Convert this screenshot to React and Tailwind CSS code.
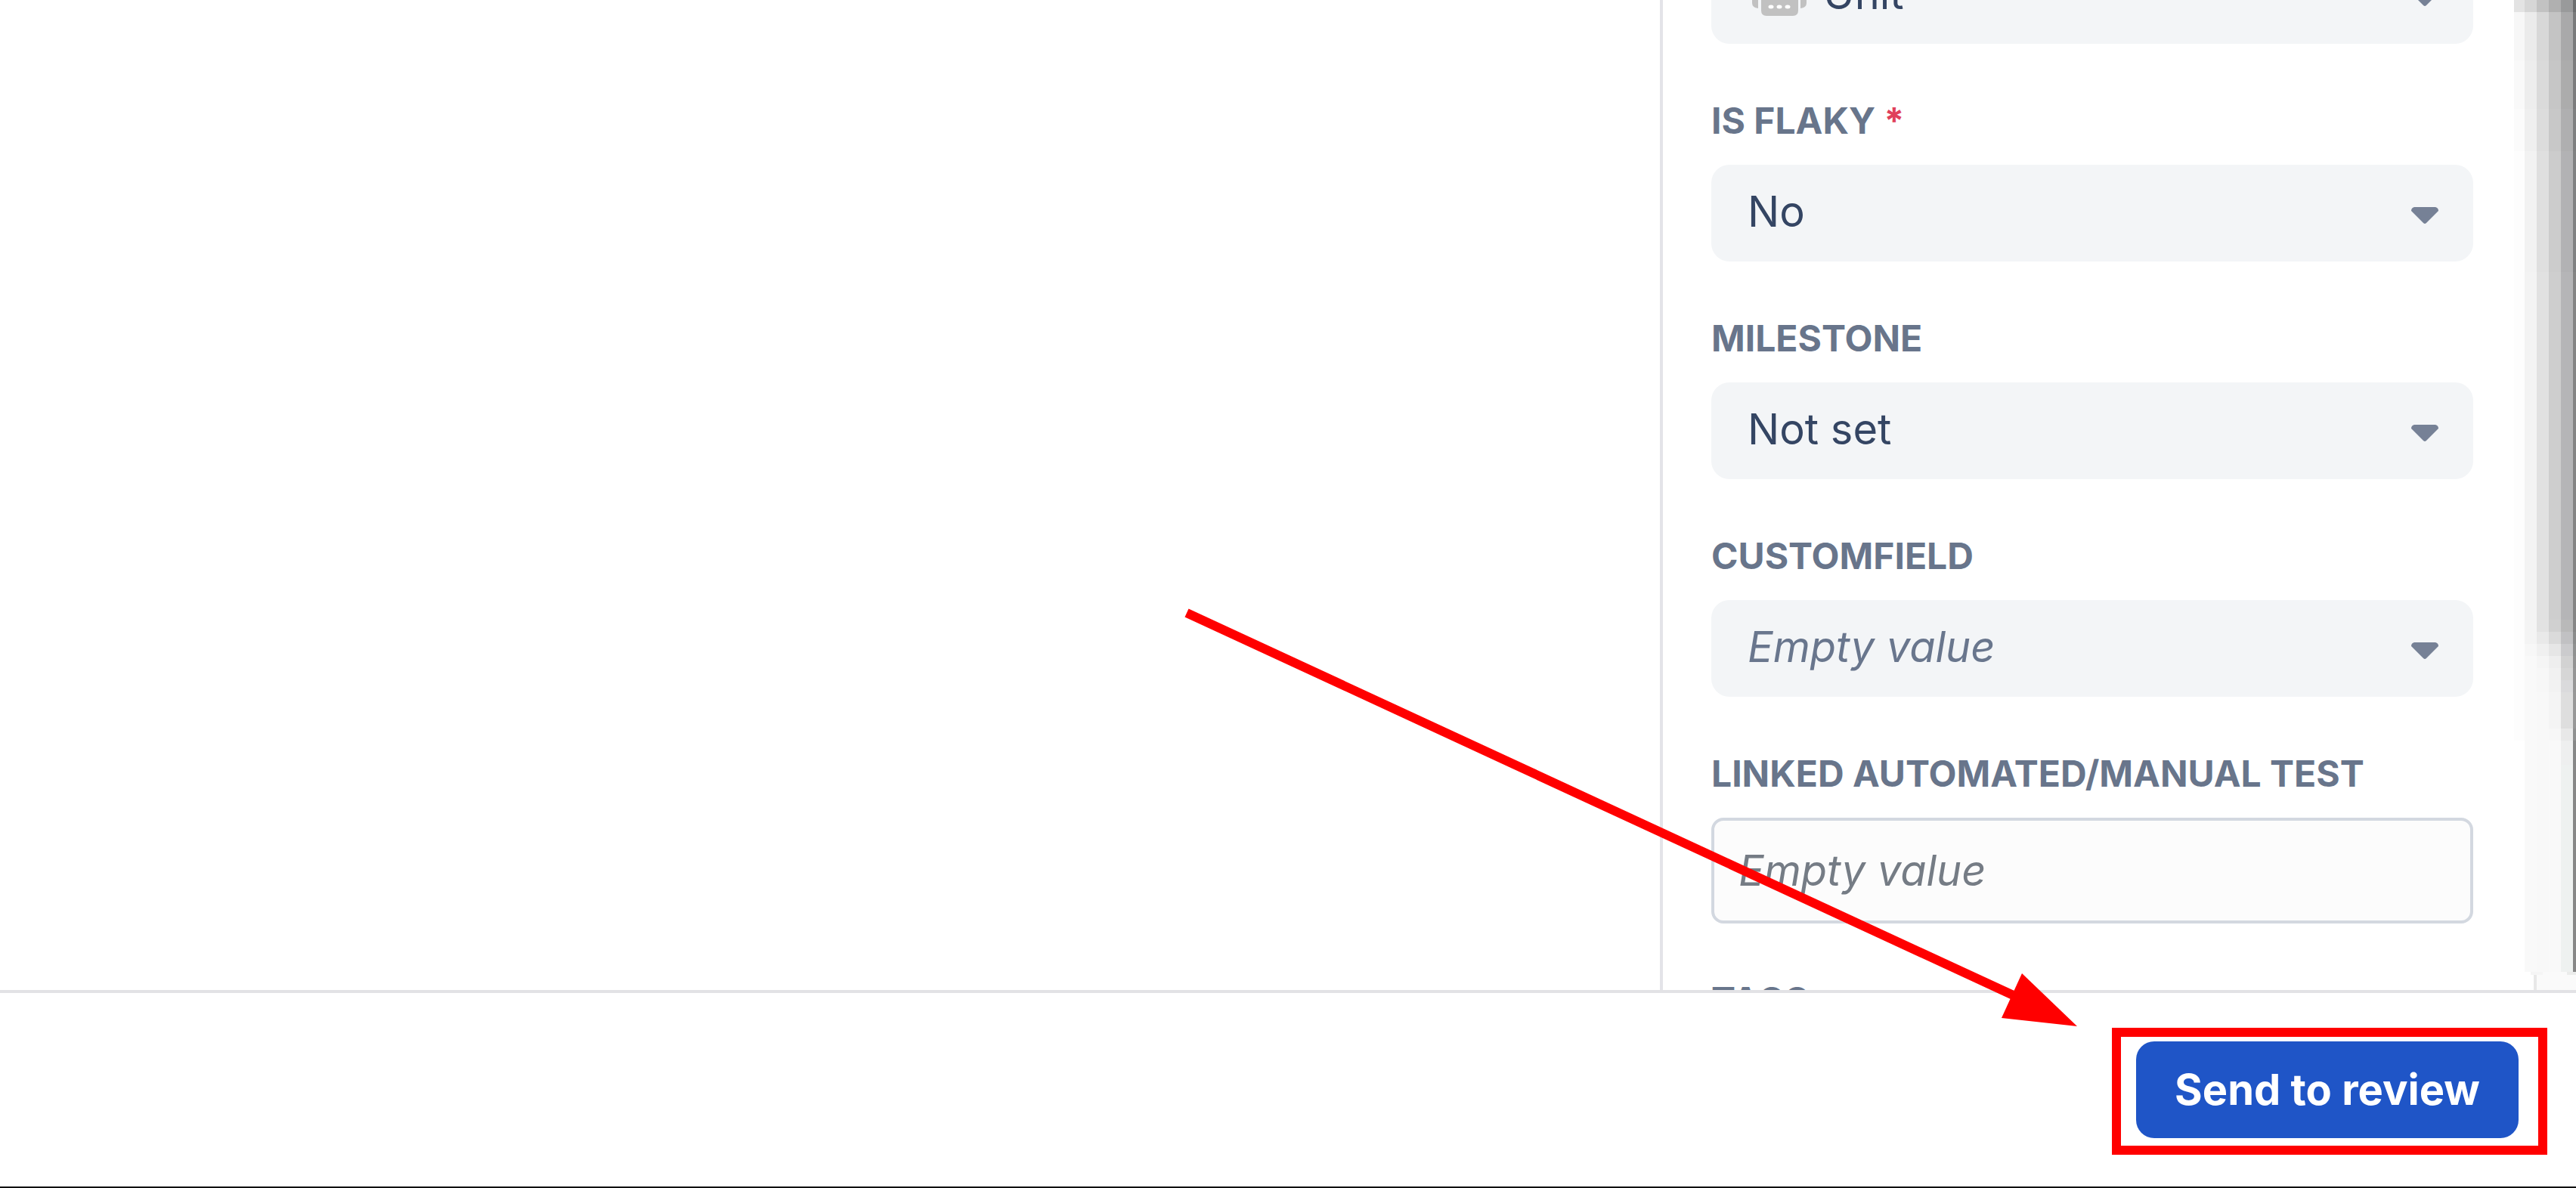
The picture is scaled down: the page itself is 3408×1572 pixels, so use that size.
import React, { useId } from "react";

function Label({ htmlFor, required, children }) {
  return (
    <label htmlFor={htmlFor} className="text-[48px] leading-[56px] font-bold text-[#68758b]">
      {children}
      {required && <span className="text-[#e0405a]"> *</span>}
    </label>
  );
}

function RobotIcon() {
  return (
    <svg viewBox="0 0 72 56" className="pointer-events-none absolute top-9 left-[54px] h-14 w-[72px] text-[#c1c1c1]" aria-hidden="true">
      <path fill="currentColor" d="M33 0h6v9h13q9 0 9 8v31q0 7-7 7H19q-7 0-7-7V17q0-8 9-8h12zM0 28q0-5 5-5h3v22q-8-1-8-7zM64 23h3q5 0 5 5v10q0 6-8 7z" />
      <circle cx="26" cy="27" r="5" fill="#fff" />
      <circle cx="46" cy="27" r="5" fill="#fff" />
      <g fill="#fff">
        <ellipse cx="25" cy="43" rx="3.5" ry="2.5" />
        <ellipse cx="36" cy="43" rx="3.5" ry="2.5" />
        <ellipse cx="47" cy="43" rx="3.5" ry="2.5" />
      </g>
    </svg>
  );
}

function Caret() {
  return (
    <svg viewBox="0 0 36 22" className="pointer-events-none absolute top-14 right-[46px] h-[22px] w-9" aria-hidden="true">
      <path d="M4 0h28q4 1 4 5L20 21q-2 2-4 0L0 5q0-4 4-5z" fill="#768196" />
    </svg>
  );
}

function SelectField({ label, value, required, empty, icon }) {
  const id = useId();
  return (
    <div className="flex flex-col gap-[30px]">
      {label && (
        <Label htmlFor={id} required={required}>
          {label}
        </Label>
      )}
      <div className="relative">
        <select
          id={id}
          aria-label={label ? undefined : "Type"}
          className={
            "block h-32 w-full appearance-none rounded-3xl bg-[#f3f5f7] pr-24 pb-1 text-[56px] " +
            (icon ? "pl-[148px] " : "pl-12 ") +
            (empty ? "text-[#69768d] italic" : "text-[#344563]")
          }
        >
          <option>{value}</option>
        </select>
        {icon}
        <Caret />
      </div>
    </div>
  );
}

const tiles = [
  ["h-4", "bg-[#e3e3e3]", "bg-[#d6d6d6]", "bg-[#c2c2c2]", "bg-[#b0b0b0]", "bg-[#999a9b]", "bg-[#6c6e6f]"],
  ["h-16", "bg-[#f7f7f7]", "bg-[#ebebeb]", "bg-[#d8d8d8]", "bg-[#c4c4c4]", "bg-[#a9a9aa]", "bg-[#797a7b]"],
  ["h-16", "bg-[#f9f9f9]", "bg-[#ededed]", "bg-[#dadada]", "bg-[#c6c6c6]", "bg-[#acacac]", "bg-[#7c7c7d]"],
  ["h-14", "bg-[#fbfbfb]", "bg-[#efefef]", "bg-[#dcdcdc]", "bg-[#c8c8c8]", "bg-[#afafb0]", "bg-[#7e7f80]"],
  ["h-[160px]", "bg-[#fdfdfd]", "bg-[#f2f2f2]", "bg-[#dfdfdf]", "bg-[#cccccc]", "bg-[#b2b2b4]", "bg-[#808182]"],
  ["h-[460px]", "bg-[#fdfdfd]", "bg-[#f3f3f3]", "bg-[#e1e1e1]", "bg-[#cecece]", "bg-[#b5b5b7]", "bg-[#848484]"],
  ["h-4", "bg-[#fdfdfd]", "bg-[#f4f4f4]", "bg-[#e2e2e2]", "bg-[#d0d0d0]", "bg-[#b9b9b9]", "bg-[#868686]"],
  ["h-4", "bg-[#fdfdfd]", "bg-[#f4f4f4]", "bg-[#e9e9e9]", "bg-[#dadada]", "bg-[#c1c1c3]", "bg-[#8b8c8c]"],
  ["h-4", "bg-[#fdfdfd]", "bg-[#f7f7f7]", "bg-[#f0f0f0]", "bg-[#e6e6e6]", "bg-[#cbcbcd]", "bg-[#909191]"],
  ["h-4", "bg-[#fdfdfd]", "bg-[#f9f9f9]", "bg-[#f5f5f5]", "bg-[#eeeeee]", "bg-[#d2d2d2]", "bg-[#939393]"],
  ["h-4", "bg-[#fdfdfd]", "bg-[#f9f9f9]", "bg-[#f7f7f7]", "bg-[#f1f1f1]", "bg-[#d6d6d6]", "bg-[#959595]"],
  ["h-4", "bg-[#fdfdfd]", "bg-[#f9f9f9]", "bg-[#f7f7f7]", "bg-[#f2f2f2]", "bg-[#dadadc]", "bg-[#969696]"],
  ["h-12", "bg-[#fdfdfd]", "bg-[#f9f9f9]", "bg-[#f8f8f8]", "bg-[#f4f4f4]", "bg-[#dedede]", "bg-[#979797]"],
  ["h-4", "bg-[#fdfdfd]", "bg-[#f9f9f9]", "bg-[#f8f8f8]", "bg-[#f7f7f7]", "bg-[#e8e8e8]", "bg-[#8f9090]"],
  ["h-8", "bg-white", "bg-[#f9f9f9]", "bg-[#f8f8f8]", "bg-[#f9f9f9]", "bg-[#eeefef]", "bg-[#868787]"],
];

function Tile({ row, size }) {
  return (
    <div className={"flex " + size}>
      <div className={"w-3.5 " + row[1]} />
      <div className={"w-4 " + row[2]} />
      <div className={"w-4 " + row[3]} />
      <div className={"w-4 " + row[4]} />
      <div className={"w-4 " + row[5]} />
      <div className={"w-1 " + row[6]} />
    </div>
  );
}

const lastTile = ["", "bg-white", "bg-[#f9f9f9]", "bg-[#f8f8f8]", "bg-[#f9f9f9]", "bg-[#eef1f0]", "bg-[#878787]"];

function PanelEdge() {
  return (
    <div className="flex w-[82px] shrink-0 flex-col" aria-hidden="true">
      {tiles.map((row, i) => (
        <Tile key={i} row={row} size={row[0]} />
      ))}
      <Tile row={lastTile} size="grow" />
      <div className="flex h-1 justify-between pl-[22px]">
        <div className="w-4 bg-[#f5f5f5]" />
        <div className="grow bg-[#fafafa]" />
        <div className="w-3 bg-[#ebeceb]" />
      </div>
      <div className="ml-[26px] h-5 border-l-4 border-[#e8e8e8] bg-[#fafafa]" />
    </div>
  );
}

function Arrow() {
  return (
    <svg viewBox="0 0 1200 572" className="pointer-events-none absolute right-[648px] bottom-[198px] h-[572px] w-[1200px]" aria-hidden="true">
      <path d="M10 11L1110 520" stroke="#ff0000" strokeWidth="12" fill="none" />
      <path d="M1115 488L1188 558L1088 547z" fill="#ff0000" />
    </svg>
  );
}

export default function App() {
  return (
    <div className="relative flex h-screen flex-col overflow-hidden border-b-2 border-[#111] bg-white font-['Inter',sans-serif]">
      <div className="flex min-h-0 grow">
        <main className="grow" />
        <aside className="flex w-[1212px] shrink-0 overflow-hidden border-l-4 border-[#e3e3e8]">
          <form className="-mt-[70px] flex min-w-0 grow flex-col gap-[74px] pr-[54px] pl-16">
            <SelectField value="Unit" icon={<RobotIcon />} />
            <SelectField label="IS FLAKY" value="No" required />
            <SelectField label="MILESTONE" value="Not set" />
            <SelectField label="CUSTOMFIELD" value="Empty value" empty />
            <div className="flex flex-col gap-[30px]">
              <Label htmlFor="linked">LINKED AUTOMATED/MANUAL TEST</Label>
              <input
                id="linked"
                type="text"
                placeholder="Empty value"
                className="h-[140px] w-full rounded-2xl border-4 border-[#d3d8e0] bg-[#fcfcfc] px-8 text-[56px] placeholder:text-[#757c85] placeholder:italic"
              />
            </div>
            <Label>TAGS</Label>
          </form>
          <PanelEdge />
        </aside>
      </div>
      <footer className="flex shrink-0 justify-end border-t-4 border-[#e2e2e5] pt-[46px] pr-[38px] pb-[42px]">
        <div className="border-12 border-[#ff0000] pt-1.5 pr-[26px] pb-2.5 pl-5">
          <button type="button" className="h-32 w-[506px] rounded-3xl bg-[#1f55c7] text-[56px] font-bold whitespace-nowrap text-white">
            Send to review
          </button>
        </div>
      </footer>
      <Arrow />
    </div>
  );
}
